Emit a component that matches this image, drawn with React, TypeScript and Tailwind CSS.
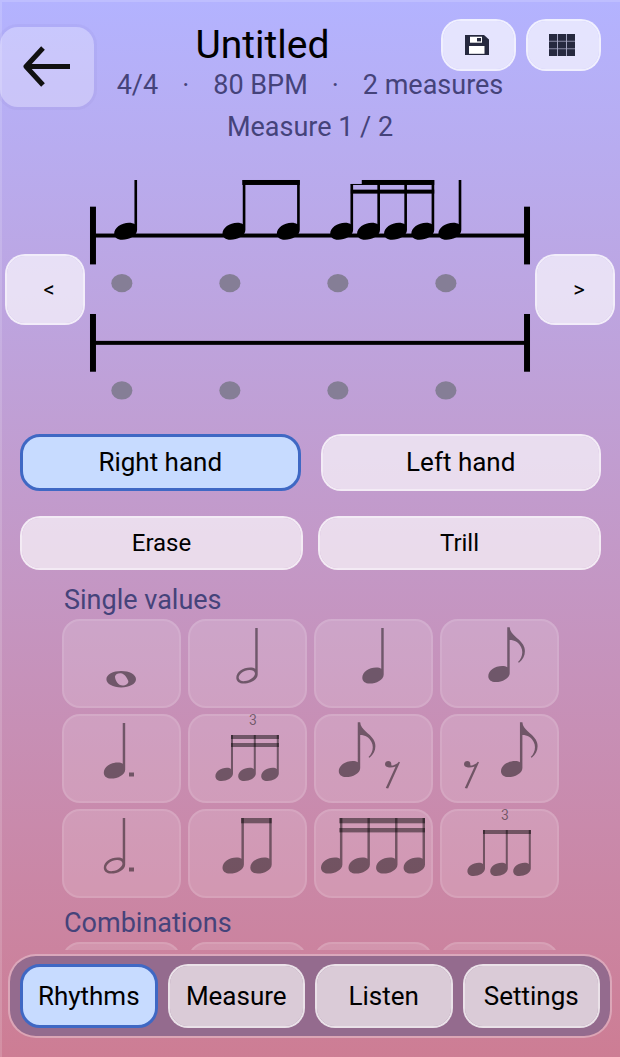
/**
 * Rhythm editor screen.
 * Shows the two-staff score on top, the hand / tool buttons, the note palette
 * and the bottom tab bar.
 */

import { useState } from 'react';
import type { ReactNode } from 'react';
import clsx from 'clsx';

const TABS = ['Rhythms', 'Measure', 'Listen', 'Settings'];
const HANDS = ['Right hand', 'Left hand'];
const BEATS = [121, 229.5, 338, 446.5];

/** Filled note head with a stem. r is half of the head width. */
function notePath(cx: number, cy: number, r: number, top: number) {
  const x = (n: number) => cx + n * r;
  const y = (n: number) => cy + n * r;
  return [
    `M${x(0.77)} ${top}H${x(1)}V${y(-0.1)}`,
    `C${x(1)} ${y(0.4)} ${x(0.3)} ${y(0.75)} ${x(-0.3)} ${y(0.75)}`,
    `C${x(-0.75)} ${y(0.75)} ${x(-1)} ${y(0.5)} ${x(-1)} ${y(0.2)}`,
    `C${x(-1)} ${y(-0.3)} ${x(-0.4)} ${y(-0.75)} ${x(0.3)} ${y(-0.75)}`,
    `C${x(0.5)} ${y(-0.75)} ${x(0.68)} ${y(-0.7)} ${x(0.77)} ${y(-0.62)}Z`,
  ].join('');
}

function Quarter({ x, y = 56.5, r = 10.7, top = 9 }: { x: number; y?: number; r?: number; top?: number }) {
  return <path d={notePath(x, y, r, top)} />;
}

function Half({ x }: { x: number }) {
  return (
    <g transform={`translate(${x} 56.5)`}>
      <path
        fillRule="evenodd"
        d={
          notePath(0, 0, 10.7, -47.5) +
          'M7.9 -2.6C8.6 0.6 3.4 5.1 -2 5.6C-5.6 5.9 -8.3 4.6 -8.3 2C-8.2 -1.6 -3 -5.4 2.4 -5.6C5.4 -5.7 7.5 -4.8 7.9 -2.6Z'
        }
      />
    </g>
  );
}

function Eighth({ x }: { x: number }) {
  return (
    <g transform={`translate(${x} 55)`}>
      <path
        d={
          notePath(0, 0, 10.7, -46.7) +
          'M10.7 -46.7C11.2 -39 20 -36 24 -29.5C27.6 -23.5 26 -16 20 -11.3L19 -11.9C23 -16 24.6 -22 22 -27C20 -31.5 15.5 -34 10.7 -34Z'
        }
      />
    </g>
  );
}

function EighthRest({ x }: { x: number }) {
  return (
    <g transform={`translate(${x} 47)`}>
      <path d="M0 3.2C0 1.2 1.4 0 3.3 0C5.3 0 6.5 1.4 6.3 3.4C6.2 4.4 6.6 4.8 8 4.4C10.5 3.8 12.5 2.5 13.8 0.8L15 1.2L3.2 27.6L0.8 27L10.6 5.4C8.5 6.3 6 6.6 4 6.4C1.6 6.2 0 5 0 3.2Z" />
    </g>
  );
}

function Triplet({ beams }: { beams: number }) {
  return (
    <>
      <text x="65" y="11" textAnchor="middle" fontSize="14">
        3
      </text>
      {[36.2, 59, 82].map((x) => (
        <Quarter key={x} x={x} y={60.4} r={8.8} top={21} />
      ))}
      <rect x="43" y="21" width="48" height="4" />
      {beams > 1 && <rect x="43" y="29" width="48" height="4" />}
    </>
  );
}

const SINGLE_VALUES: { name: string; glyph: ReactNode }[] = [
  {
    name: 'Whole note',
    glyph: (
      <path
        fillRule="evenodd"
        d="M44.4 60.3C44.4 55.5 51 52.1 59.2 52.1S74 55.5 74 60.3S67.4 68.4 59.2 68.4S44.4 65 44.4 60.3ZM53 57.5C53.6 55 56 54 58.8 54.2C62.5 54.6 65 58.5 66.3 62C66.8 64.5 63.8 66.6 60.6 66.6C56.2 66.5 53 61.5 53 57.5Z"
      />
    ),
  },
  { name: 'Half note', glyph: <Half x={59} /> },
  { name: 'Quarter note', glyph: <Quarter x={59} /> },
  { name: 'Eighth note', glyph: <Eighth x={59} /> },
  {
    name: 'Dotted quarter note',
    glyph: (
      <>
        <Quarter x={52.5} />
        <rect x="67" y="58.5" width="5" height="4" />
      </>
    ),
  },
  { name: 'Sixteenth triplet', glyph: <Triplet beams={2} /> },
  {
    name: 'Eighth note and rest',
    glyph: (
      <>
        <Eighth x={35.5} />
        <EighthRest x={71} />
      </>
    ),
  },
  {
    name: 'Rest and eighth note',
    glyph: (
      <>
        <EighthRest x={24} />
        <Eighth x={71.7} />
      </>
    ),
  },
  {
    name: 'Dotted half note',
    glyph: (
      <>
        <Half x={52.5} />
        <rect x="67" y="58.5" width="5" height="4" />
      </>
    ),
  },
  {
    name: 'Two eighth notes',
    glyph: (
      <>
        <Quarter x={45.2} />
        <Quarter x={73} />
        <rect x="53" y="9" width="30.7" height="5.3" />
      </>
    ),
  },
  {
    name: 'Four sixteenth notes',
    glyph: (
      <>
        {[17.7, 45.2, 72.8, 100.3].map((x) => (
          <Quarter key={x} x={x} />
        ))}
        <rect x="25.3" y="9" width="85.7" height="5.3" />
        <rect x="25.3" y="19" width="85.7" height="4.4" />
      </>
    ),
  },
  { name: 'Eighth triplet', glyph: <Triplet beams={1} /> },
];

function PaletteTile({ name, children }: { name: string; children?: ReactNode }) {
  return (
    <button
      type="button"
      aria-label={name}
      className="h-[89px] rounded-[18px] bg-white/15 ring-2 ring-inset ring-white/10"
    >
      <svg
        viewBox="0 0 119 89"
        className="h-full w-full overflow-visible"
        fill="#000"
        fillOpacity="0.46"
        fontFamily="Roboto, sans-serif"
      >
        {children}
      </svg>
    </button>
  );
}

function PillButton({
  label,
  active = false,
  onClick,
  className,
}: {
  label: string;
  active?: boolean;
  onClick?: () => void;
  className?: string;
}) {
  return (
    <button
      type="button"
      onClick={onClick}
      className={clsx(
        'rounded-[20px] text-black',
        active ? 'border-3 border-[#3f68c4] bg-[#c7dbff]' : 'border-2 border-white/80 bg-white/65 bg-clip-padding',
        className,
      )}
    >
      {label}
    </button>
  );
}

function Staff({ y }: { y: number }) {
  return (
    <>
      <rect x="89" y={y - 29} width="6" height="58" />
      <rect x="525" y={y - 29} width="6" height="58" />
      <rect x="92" y={y - 2} width="436" height="4" />
      {BEATS.map((x) => (
        <ellipse key={x} cx={x} cy={y + 47.8} rx="10.6" ry="9.2" fill="#857e96" />
      ))}
    </>
  );
}

function Score() {
  return (
    <svg viewBox="84 178 452 223" className="min-w-0 flex-1" role="img" aria-label="Score">
      <Staff y={235.8} />
      <Staff y={343.6} />
      {[124.8, 233.6, 288.2, 341.8, 368.8, 395.9, 423.3, 450.5].map((x, i) => (
        <Quarter key={x} x={x} y={231.5} r={11.5} top={i === 3 ? 184 : 180} />
      ))}
      <rect x="242" y="180" width="57.7" height="5" />
      <rect x="362" y="180" width="72.8" height="5" />
      <rect x="351" y="184" width="12" height="1" />
      <rect x="351" y="189.7" width="83.8" height="4" />
    </svg>
  );
}

function SaveIcon() {
  return (
    <svg viewBox="0 0 24 20" className="h-5 w-6" aria-hidden="true">
      <path d="M0 0H19L24 4.5V20H0Z" fill="#26293f" />
      <rect x="5" y="1.7" width="12" height="6" fill="#fff" />
      <rect x="12" y="3" width="4" height="3.4" fill="#26293f" />
      <rect x="4" y="11" width="15.5" height="7.8" fill="#fff" />
    </svg>
  );
}

function GridIcon() {
  return (
    <svg viewBox="0 0 26 22" className="h-[22px] w-[26px]" aria-hidden="true">
      <rect width="26" height="22" fill="#a3a4c0" />
      {[0, 9, 18].map((x) =>
        [0, 7.6, 15.2].map((y) => <rect key={`${x}-${y}`} x={x} y={y} width="8" height="6.8" fill="#26293f" />),
      )}
    </svg>
  );
}

const ICON_BUTTON =
  'flex h-[52px] w-[75px] items-center justify-center rounded-[20px] border-2 border-white/80 bg-white/65 bg-clip-padding pr-1';
const ARROW_BUTTON =
  'h-[71px] w-20 shrink-0 rounded-[20px] border-2 border-white/80 bg-white/65 bg-clip-padding pl-2 text-[22px] text-black';

export default function App() {
  const [hand, setHand] = useState(HANDS[0]);
  const [tab, setTab] = useState(TABS[0]);

  return (
    <div className="flex h-screen flex-col overflow-hidden bg-linear-to-b from-[#b3b3ff] to-[#cd7d94] font-['Roboto',sans-serif] text-[26px] text-[#45437a] shadow-[inset_2px_2px_0_rgba(255,255,255,0.15)]">
      {/* Header */}
      <header className="flex items-start">
        <button
          type="button"
          aria-label="Back"
          className="mt-[27px] flex h-20 w-[94px] shrink-0 items-center justify-center rounded-[18px] bg-white/28 shadow-[0_0_0_3px_rgba(90,70,160,0.05)]"
        >
          <svg viewBox="0 0 48 42" className="h-[42px] w-12" fill="none" stroke="#111" strokeWidth="5" aria-hidden="true">
            <path d="M20 2L3 20.5L20 39M3 20.5H47" strokeLinejoin="round" />
          </svg>
        </button>
        <div className="min-w-0 flex-1 pt-[19px]">
          <div className="flex items-center gap-[10px] pr-[19px]">
            <h1 className="flex-1 text-center text-[39px] leading-[52px] text-black">Untitled</h1>
            <button type="button" aria-label="Save" className={ICON_BUTTON}>
              <SaveIcon />
            </button>
            <button type="button" aria-label="Grid" className={ICON_BUTTON}>
              <GridIcon />
            </button>
          </div>
          <div className="mr-[94px] text-center text-[27px] leading-7">
            <p className="flex justify-center gap-6 whitespace-nowrap">
              <span>4/4</span>
              <span>·</span>
              <span>80 BPM</span>
              <span>·</span>
              <span>2 measures</span>
            </p>
            <p className="mt-[14px]">Measure 1 / 2</p>
          </div>
        </div>
      </header>

      {/* Score with measure navigation */}
      <section className="mt-[37px] flex items-center px-[5px]">
        <button type="button" aria-label="Previous measure" className={ARROW_BUTTON}>
          &lt;
        </button>
        <Score />
        <button type="button" aria-label="Next measure" className={ARROW_BUTTON}>
          &gt;
        </button>
      </section>

      {/* Hand and tool buttons */}
      <section className="mt-[34px] pr-[19px] pl-5">
        <div className="grid grid-cols-2 gap-5">
          {HANDS.map((h) => (
            <PillButton key={h} label={h} active={h === hand} onClick={() => setHand(h)} className="h-[57px]" />
          ))}
        </div>
        <div className="mt-[25px] grid grid-cols-2 gap-[15px] text-2xl">
          <PillButton label="Erase" className="h-[54px]" />
          <PillButton label="Trill" className="h-[54px]" />
        </div>
      </section>

      {/* Note palette */}
      <section className="mt-3 min-h-0 flex-1 overflow-hidden pr-[61px] pl-[62px]">
        <h2 className="pl-0.5 text-[27px] leading-9">Single values</h2>
        <div className="mt-px grid grid-cols-4 gap-x-[7px] gap-y-1.5">
          {SINGLE_VALUES.map((v) => (
            <PaletteTile key={v.name} name={v.name}>
              {v.glyph}
            </PaletteTile>
          ))}
        </div>
        <h2 className="mt-[7px] pl-0.5 text-[27px] leading-9">Combinations</h2>
        <div className="mt-px grid grid-cols-4 gap-x-[7px]">
          {[1, 2, 3, 4].map((n) => (
            <PaletteTile key={n} name={`Combination ${n}`} />
          ))}
        </div>
      </section>

      {/* Tab bar */}
      <nav className="mx-2 mt-1 mb-[19px] grid grid-cols-4 gap-[10px] rounded-[28px] border-2 border-white/30 bg-[#946b8e] bg-clip-padding px-[10px] py-2">
        {TABS.map((t) => (
          <PillButton key={t} label={t} active={t === tab} onClick={() => setTab(t)} className="h-16" />
        ))}
      </nav>
    </div>
  );
}
